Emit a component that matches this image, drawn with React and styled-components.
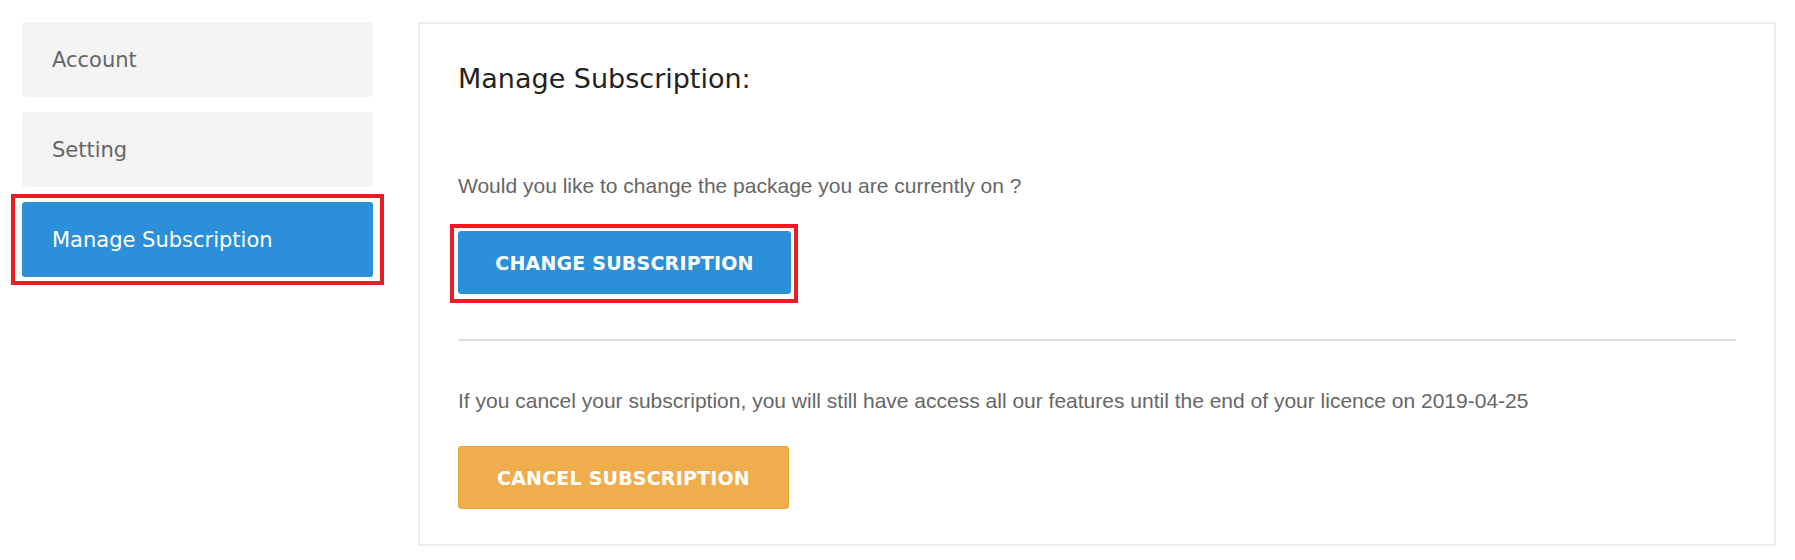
import React from "react";
import styled, { createGlobalStyle } from "styled-components";

const Global = createGlobalStyle`
  html, body { margin: 0; padding: 0; background: #ffffff; }
  * { box-sizing: border-box; }
`;

const Page = styled.div`
  display: flex;
  align-items: flex-start;
  gap: 45px;
  padding: 22px 19px 0 22px;
  width: 1795px;
`;

const Sidebar = styled.nav`
  display: flex;
  flex-direction: column;
  gap: 15px;
  width: 351px;
  flex-shrink: 0;
`;

const NavItem = styled.div`
  height: 75px;
  display: flex;
  align-items: center;
  padding-left: 30px;
  border-radius: 3px;
  font-family: "DejaVu Sans", sans-serif;
  font-size: 21px;
  color: ${(p) => (p.$active ? "#ffffff" : "#666666")};
  background: ${(p) => (p.$active ? "#2b90d9" : "#f4f4f4")};
`;

const Highlight = styled.div`
  border: 4px solid #ed1c24;
  padding: ${(p) => p.$pad};
  margin: ${(p) => p.$margin};
  align-self: ${(p) => (p.$inline ? "flex-start" : "stretch")};
`;

const Panel = styled.section`
  flex: 1;
  border: 2px solid #ececec;
  padding: 39px 38px 35px 38px;
  display: flex;
  flex-direction: column;
  align-items: flex-start;
`;

const Title = styled.h2`
  margin: 0;
  font-family: "DejaVu Sans", sans-serif;
  font-weight: normal;
  font-size: 27px;
  line-height: 32px;
  color: #222222;
`;

const Text = styled.p`
  margin: ${(p) => p.$margin};
  font-family: "Liberation Sans", Arial, sans-serif;
  font-size: 21px;
  line-height: 24px;
  color: #666666;
`;

const Button = styled.button`
  display: block;
  width: ${(p) => p.$width}px;
  height: 63px;
  margin: 0;
  padding: 0;
  border-radius: 3px;
  border: 1px solid ${(p) => (p.$variant === "warning" ? "#eea236" : "#2b90d9")};
  background: ${(p) => (p.$variant === "warning" ? "#f0ad4e" : "#2b90d9")};
  color: #ffffff;
  font-family: "DejaVu Sans", sans-serif;
  font-weight: bold;
  font-size: 19px;
  letter-spacing: 0.2px;
  text-transform: uppercase;
  cursor: pointer;
`;

const Divider = styled.hr`
  align-self: stretch;
  margin: 45px 0 48px 0;
  border: 0;
  border-top: 2px solid #e0e0e0;
`;

export default function App() {
  return (
    <>
      <Global />
      <Page>
        <Sidebar>
          <NavItem>Account</NavItem>
          <NavItem>Setting</NavItem>
          <Highlight $pad="4px 7px" $margin="-8px -11px">
            <NavItem $active>Manage Subscription</NavItem>
          </Highlight>
        </Sidebar>
        <Panel>
          <Title>Manage Subscription:</Title>
          <Text $margin="79px 0 33px 0">
            Would you like to change the package you are currently on ?
          </Text>
          <Highlight $inline $pad="3px 3px 5px 4px" $margin="-7px -7px -9px -8px">
            <Button $width={333}>Change Subscription</Button>
          </Highlight>
          <Divider />
          <Text $margin="0 0 33px 0">
            If you cancel your subscription, you will still have access all our
            features until the end of your licence on 2019-04-25
          </Text>
          <Button $variant="warning" $width={331}>
            Cancel Subscription
          </Button>
        </Panel>
      </Page>
    </>
  );
}
